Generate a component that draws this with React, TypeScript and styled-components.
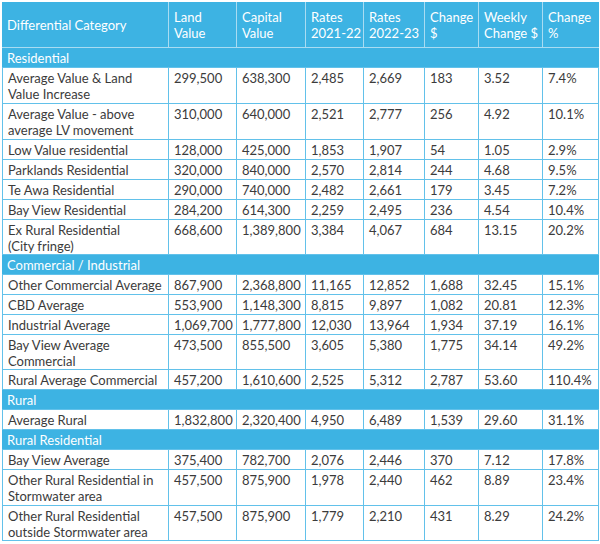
import React from "react";
import styled, { createGlobalStyle } from "styled-components";

const Global = createGlobalStyle`
  html, body { margin: 0; padding: 0; background: #ffffff; }
  body { font-family: "Lato", "Open Sans", sans-serif; }
`;

const BLUE = "#3db3e3";
const LINE = "#62c1ea";
const HEAD_LINE = "#a9dcf2";

const Wrap = styled.div`
  padding: 2px 0 0 2px;
`;

const Table = styled.table`
  border-collapse: separate;
  border-spacing: 0;
  table-layout: fixed;
  width: 597px;
  font-size: 13px;
  line-height: 16px;
  color: #3b3b3b;
`;

const HeadCell = styled.th`
  box-sizing: border-box;
  background: ${BLUE};
  color: #ffffff;
  font-weight: 400;
  text-align: left;
  vertical-align: middle;
  white-space: nowrap;
  padding: 7px 2px 6px 5px;
  border-bottom: 1px solid ${HEAD_LINE};
  border-right: 1px solid ${HEAD_LINE};
  &:last-child { border-right: none; }
`;

const SectionCell = styled.td`
  background: ${BLUE};
  color: #ffffff;
  padding: 2px 4px 1px 5px;
  border-bottom: 1px solid ${LINE};
`;

const Cell = styled.td`
  box-sizing: border-box;
  vertical-align: top;
  padding: 2px 2px 1px 5px;
  border-right: 1px solid ${LINE};
  border-bottom: 1px solid ${LINE};
  white-space: nowrap;
`;

const NameCell = styled(Cell)<{ $roomy?: boolean }>`
  white-space: pre-line;
  padding-bottom: ${(p) => (p.$roomy ? "1px" : "0")};
  border-left: 1px solid ${LINE};
`;

type Row = { cells: string[]; roomy?: boolean };
type Section = { title: string; rows: Row[] };

const sections: Section[] = [
  {
    title: "Residential",
    rows: [
      { cells: ["Average Value & Land\nValue Increase", "299,500", "638,300", "2,485", "2,669", "183", "3.52", "7.4%"], roomy: true },
      { cells: ["Average Value - above\naverage LV movement", "310,000", "640,000", "2,521", "2,777", "256", "4.92", "10.1%"], roomy: true },
      { cells: ["Low Value residential", "128,000", "425,000", "1,853", "1,907", "54", "1.05", "2.9%"] },
      { cells: ["Parklands Residential", "320,000", "840,000", "2,570", "2,814", "244", "4.68", "9.5%"] },
      { cells: ["Te Awa Residential", "290,000", "740,000", "2,482", "2,661", "179", "3.45", "7.2%"] },
      { cells: ["Bay View Residential", "284,200", "614,300", "2,259", "2,495", "236", "4.54", "10.4%"] },
      { cells: ["Ex Rural Residential\n(City fringe)", "668,600", "1,389,800", "3,384", "4,067", "684", "13.15", "20.2%"] },
    ],
  },
  {
    title: "Commercial / Industrial",
    rows: [
      { cells: ["Other Commercial Average", "867,900", "2,368,800", "11,165", "12,852", "1,688", "32.45", "15.1%"] },
      { cells: ["CBD Average", "553,900", "1,148,300", "8,815", "9,897", "1,082", "20.81", "12.3%"] },
      { cells: ["Industrial Average", "1,069,700", "1,777,800", "12,030", "13,964", "1,934", "37.19", "16.1%"] },
      { cells: ["Bay View Average\nCommercial", "473,500", "855,500", "3,605", "5,380", "1,775", "34.14", "49.2%"] },
      { cells: ["Rural Average Commercial", "457,200", "1,610,600", "2,525", "5,312", "2,787", "53.60", "110.4%"] },
    ],
  },
  {
    title: "Rural",
    rows: [{ cells: ["Average Rural", "1,832,800", "2,320,400", "4,950", "6,489", "1,539", "29.60", "31.1%"] }],
  },
  {
    title: "Rural Residential",
    rows: [
      { cells: ["Bay View Average", "375,400", "782,700", "2,076", "2,446", "370", "7.12", "17.8%"] },
      { cells: ["Other Rural Residential in\nStormwater area", "457,500", "875,900", "1,978", "2,440", "462", "8.89", "23.4%"], roomy: true },
      { cells: ["Other Rural Residential\noutside Stormwater area", "457,500", "875,900", "1,779", "2,210", "431", "8.29", "24.2%"] },
    ],
  },
];

const widths = [167, 68, 69, 58, 61, 54, 64, 56];

const headers: React.ReactNode[] = [
  "Differential Category",
  <>Land<br />Value</>,
  <>Capital<br />Value</>,
  <>Rates<br />2021-22</>,
  <>Rates<br />2022-23</>,
  <>Change<br />$</>,
  <>Weekly<br />Change $</>,
  <>Change<br />%</>,
];

export default function App() {
  return (
    <Wrap>
      <Global />
      <Table>
        <colgroup>
          {widths.map((w, i) => (
            <col key={i} style={{ width: w }} />
          ))}
        </colgroup>
        <thead>
          <tr>
            {headers.map((h, i) => (
              <HeadCell key={i}>{h}</HeadCell>
            ))}
          </tr>
        </thead>
        <tbody>
          {sections.map((s) => (
            <React.Fragment key={s.title}>
              <tr>
                <SectionCell colSpan={8}>{s.title}</SectionCell>
              </tr>
              {s.rows.map((r) => (
                <tr key={r.cells[0]}>
                  <NameCell $roomy={r.roomy}>{r.cells[0]}</NameCell>
                  {r.cells.slice(1).map((c, i) => (
                    <Cell key={i}>{c}</Cell>
                  ))}
                </tr>
              ))}
            </React.Fragment>
          ))}
        </tbody>
      </Table>
    </Wrap>
  );
}
